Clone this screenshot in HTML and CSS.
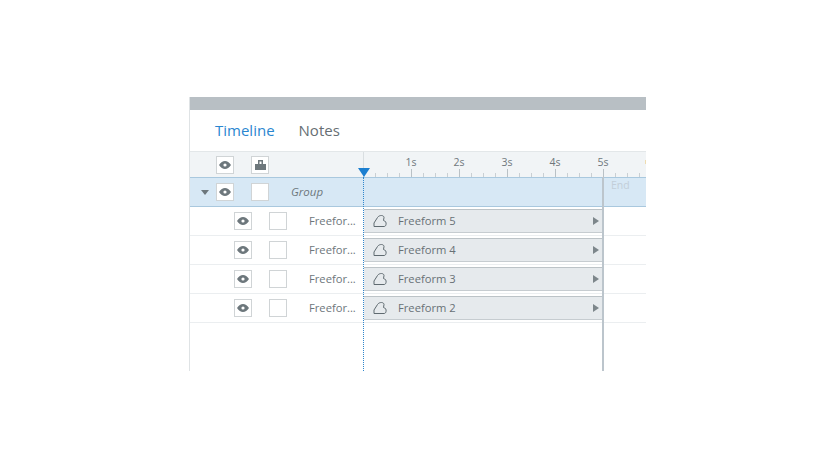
FILE: index.html
```html
<!DOCTYPE html>
<html lang="en">

<head>
	<meta charset="UTF-8">
	<title>Timeline</title>
	<link rel="stylesheet" href="styles.css">
</head>

<body>
	<svg class="defs" width="0" height="0">
		<symbol id="eye" viewBox="0 0 12 8">
			<path fill-rule="evenodd" d="M0 4C1.800 1.300 3.800 0 6 0s4.200 1.300 6 4c-1.800 2.700-3.800 4-6 4S1.800 6.700 0 4zm6-1.600a1.600 1.600 0 1 0 0 3.200 1.600 1.600 0 0 0 0-3.200z" />
		</symbol>
		<symbol id="cloud" viewBox="0 0 14 12">
			<path fill="none" stroke="#5f6a70" stroke-width="1" d="M1 11.500V8L4.500 2.500C5.500 1 7 .5 8.500 .5 10 .5 11 1.500 11 2.500L10.500 5.500C12.500 6 13.500 7.500 13 9.500 12.700 11 12 11.500 11 11.500Z" />
		</symbol>
	</svg>
	<div class="window">
		<div class="titlebar"></div>
		<div class="tabs">
			<span class="tab active">Timeline</span>
			<span class="tab">Notes</span>
		</div>
		<div class="head">
			<div class="side side-head">
				<span class="btn"><svg class="eye"><use href="#eye" /></svg></span>
				<span class="btn">
					<svg class="lock" viewBox="0 0 11 10">
						<path d="M3 0h5v4h3v6H0V4h3zM4.500 1.500V4h2V1.500z" fill-rule="evenodd" />
					</svg>
				</span>
			</div>
			<div class="ruler">
				<span>1s</span><span>2s</span><span>3s</span><span>4s</span><span>5s</span>
			</div>
		</div>
		<div class="row group">
			<div class="side">
				<span class="caret"></span>
				<span class="btn"><svg class="eye"><use href="#eye" /></svg></span>
				<span class="btn"></span>
				<span class="group-name">Group</span>
			</div>
			<div class="track end-label">End</div>
		</div>
		<div class="row">
			<div class="side">
				<span class="btn"><svg class="eye"><use href="#eye" /></svg></span>
				<span class="btn"></span>
				<span class="name">Freefor...</span>
			</div>
			<div class="track">
				<div class="bar"><svg class="cloud"><use href="#cloud" /></svg><span class="bar-name">Freeform 5</span><span class="arrow"></span></div>
			</div>
		</div>
		<div class="row">
			<div class="side">
				<span class="btn"><svg class="eye"><use href="#eye" /></svg></span>
				<span class="btn"></span>
				<span class="name">Freefor...</span>
			</div>
			<div class="track">
				<div class="bar"><svg class="cloud"><use href="#cloud" /></svg><span class="bar-name">Freeform 4</span><span class="arrow"></span></div>
			</div>
		</div>
		<div class="row">
			<div class="side">
				<span class="btn"><svg class="eye"><use href="#eye" /></svg></span>
				<span class="btn"></span>
				<span class="name">Freefor...</span>
			</div>
			<div class="track">
				<div class="bar"><svg class="cloud"><use href="#cloud" /></svg><span class="bar-name">Freeform 3</span><span class="arrow"></span></div>
			</div>
		</div>
		<div class="row">
			<div class="side">
				<span class="btn"><svg class="eye"><use href="#eye" /></svg></span>
				<span class="btn"></span>
				<span class="name">Freefor...</span>
			</div>
			<div class="track">
				<div class="bar"><svg class="cloud"><use href="#cloud" /></svg><span class="bar-name">Freeform 2</span><span class="arrow"></span></div>
			</div>
		</div>
		<span class="playhead"></span>
		<span class="end-line"></span>
		<span class="next-mark"></span>
	</div>
</body>

</html>
```

FILE: styles.css
```css
* {
	margin: 0;
	padding: 0;
	box-sizing: border-box;
}

html,
body {
	height: 100%;
	overflow: hidden;
}

body {
	background: #fff;
	padding: 97px 0 0 189px;
	font-family: "Open Sans", "Noto Sans", sans-serif;
	color: #6f777c;
}

.defs {
	position: absolute;
}

.window {
	position: relative;
	width: 457px;
	height: 274px;
	border-left: 1px solid #dfe3e5;
	overflow: hidden;
}

.titlebar {
	height: 13px;
	margin-left: -1px;
	background: #b8bfc4;
}

.tabs {
	display: flex;
	align-items: center;
	gap: 24px;
	height: 41px;
	padding: 0 0 2px 25px;
	font-size: 15px;
}

.tab {
	color: #666e73;
}

.tab.active {
	color: #2a86d0;
}

.head {
	display: flex;
	height: 26px;
	background: #f1f4f6;
	border-top: 1px solid #e3e7e9;
}

.side {
	display: flex;
	align-items: center;
	flex: none;
	width: 173px;
	padding-left: 44px;
	gap: 17px;
}

.side-head {
	padding-left: 26px;
	border-right: 1px solid #d9dee1;
	width: 174px;
}

.btn {
	display: flex;
	align-items: center;
	justify-content: center;
	flex: none;
	width: 18px;
	height: 18px;
	background: #fff;
	border: 1px solid #d0d4d6;
}

.eye {
	width: 12px;
	height: 8px;
	fill: #6d777c;
}

.lock {
	width: 11px;
	height: 10px;
	fill: #6d777c;
}

.ruler {
	display: flex;
	flex: 1;
	padding-left: 23px;
	font-size: 10.500px;
	line-height: 21px;
	background:
		repeating-linear-gradient(90deg, #b9c1c6 0 1px, transparent 1px 48px) 47px 100% / 100% 8px no-repeat,
		repeating-linear-gradient(90deg, #c9cfd3 0 1px, transparent 1px 12px) 11px 100% / 100% 4px no-repeat;
}

.ruler span {
	width: 48px;
	flex: none;
	text-align: center;
}

.row {
	display: flex;
	height: 29px;
	border-bottom: 1px solid #ebeef0;
}

.group {
	height: 30px;
	margin-left: -1px;
	background: #d7e8f5;
	border-top: 1px solid #a9c8de;
	border-bottom: 1px solid #a9c8de;
}

.group .side {
	width: 174px;
	padding-left: 12px;
	gap: 0;
}

.group .btn:nth-child(3) {
	margin-left: 17px;
}

.caret {
	width: 0;
	height: 0;
	margin-right: 7px;
	border-style: solid;
	border-width: 5px 4.500px 0;
	border-color: #6d777c transparent transparent;
}

.group-name {
	margin-left: 22px;
	margin-bottom: 2px;
	font-size: 11.500px;
	font-style: italic;
	color: #6d777c;
}

.name {
	margin-left: 5px;
	margin-bottom: 2px;
	font-size: 11.200px;
	white-space: nowrap;
	color: #6d767b;
}

.track {
	flex: 1;
	min-width: 0;
	padding: 2px 0 0 1px;
}

.end-label {
	padding: 0 0 0 248px;
	font-size: 10.500px;
	line-height: 15px;
	color: #c2ced8;
}

.bar {
	display: flex;
	align-items: center;
	width: 238px;
	height: 24px;
	background: #e6eaed;
	border-top: 1px solid #bcc3c7;
	border-bottom: 1px solid #c6ccd0;
	padding-left: 9px;
	font-size: 11.200px;
	color: #687176;
}

.bar-name {
	margin-bottom: 1px;
}

.cloud {
	width: 14px;
	height: 12px;
	margin-right: 11px;
	flex: none;
}

.arrow {
	width: 0;
	height: 0;
	margin: 0 3px 0 auto;
	border-style: solid;
	border-width: 4px 0 4px 6px;
	border-color: transparent transparent transparent #7d868b;
}

.playhead {
	position: absolute;
	left: 173px;
	top: 80px;
	bottom: 0;
	border-left: 1px dotted #2f86cc;
}

.playhead::before {
	content: "";
	position: absolute;
	left: -6px;
	top: -9px;
	border-style: solid;
	border-width: 9px 6.500px 0;
	border-color: #1c7fd0 transparent transparent;
}

.end-line {
	position: absolute;
	left: 412px;
	top: 80px;
	bottom: 0;
	width: 2px;
	background: #bcc5cc;
}

.next-mark {
	position: absolute;
	right: 0;
	top: 63px;
	width: 1px;
	height: 4px;
	background: #eedcb0;
}
```
